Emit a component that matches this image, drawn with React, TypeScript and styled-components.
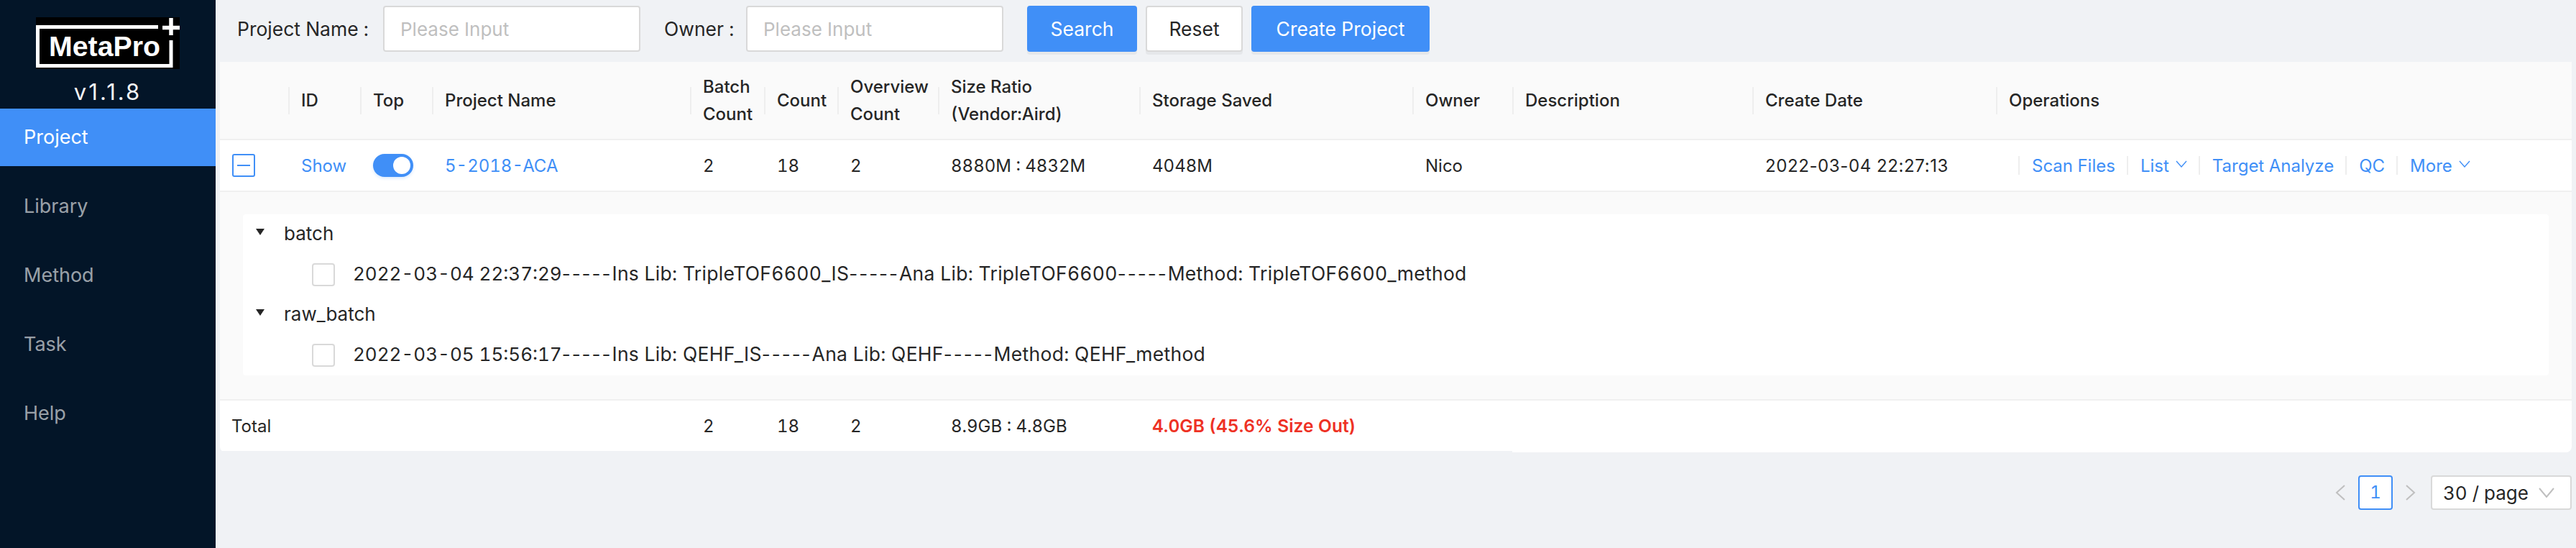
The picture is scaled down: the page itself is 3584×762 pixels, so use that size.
import React from "react";
import styled, { createGlobalStyle } from "styled-components";

const GlobalStyle = createGlobalStyle`
  html, body {
    margin: 0;
    padding: 0;
    background: #f0f2f5;
    font-family: Inter, "Noto Sans", sans-serif;
    font-feature-settings: "tnum";
    color: #262626;
  }
  * { box-sizing: border-box; }
`;

const navItems = ["Project", "Library", "Method", "Task", "Help"];

const columns = [
  { title: "", width: 95 },
  { title: "ID", width: 100 },
  { title: "Top", width: 100 },
  { title: "Project Name", width: 359 },
  { title: "Batch Count", width: 103 },
  { title: "Count", width: 102 },
  { title: "Overview Count", width: 140 },
  { title: "Size Ratio (Vendor:Aird)", width: 280 },
  { title: "Storage Saved", width: 380 },
  { title: "Owner", width: 139 },
  { title: "Description", width: 334 },
  { title: "Create Date", width: 339 },
  { title: "Operations", width: 801 },
];

const Logo = () => (
  <LogoSvg viewBox="0 0 200 72" width={200} height={72}>
    <rect width="200" height="72" fill="#000" />
    <path d="M170 13.5H2.5V67.5H188V32" fill="none" stroke="#fff" strokeWidth="5" />
    <path d="M176 14.5H200M188 1V25" fill="none" stroke="#fff" strokeWidth="5.5" />
    <text x="18" y="54" fill="#fff" fontFamily="Liberation Sans" fontWeight="700" fontSize="39" textLength="155" lengthAdjust="spacingAndGlyphs">
      MetaPro
    </text>
  </LogoSvg>
);

const Chevron = () => (
  <ChevronSvg viewBox="0 0 16 10" width={16} height={10}>
    <path d="M1 1l7 8 7-8" fill="none" stroke="currentColor" strokeWidth="1.4" />
  </ChevronSvg>
);

interface TreeGroupProps {
  name: string;
  date: string;
  parts: string[];
}

const TreeGroup = ({ name, date, parts }: TreeGroupProps) => (
  <>
    <TreeRow>
      <Caret viewBox="0 0 12 9" width={12} height={9}>
        <path d="M0 0h12L6 9z" fill="#262626" />
      </Caret>
      {name}
    </TreeRow>
    <TreeLeaf>
      <CheckBox />
      <span>{date}</span>
      {parts.map((part) => (
        <React.Fragment key={part}>
          <Dashes>-----</Dashes>
          <LeafPart>{part}</LeafPart>
        </React.Fragment>
      ))}
    </TreeLeaf>
  </>
);

export default function App() {
  return (
    <>
      <GlobalStyle />
      <Page>
        <Sidebar>
          <LogoBlock>
            <Logo />
            <Version>v1.1.8</Version>
          </LogoBlock>
          <Nav>
            {navItems.map((item, i) => (
              <NavItem key={item} $active={i === 0}>
                {item}
              </NavItem>
            ))}
          </Nav>
        </Sidebar>
        <Main>
          <SearchBar>
            <Label $width={203}>Project Name :</Label>
            <SearchInput placeholder="Please Input" />
            <Label $width={114} $left={33}>Owner :</Label>
            <SearchInput placeholder="Please Input" />
            <Buttons>
              <Button $primary $width={153}>Search</Button>
              <Button $width={135}>Reset</Button>
              <Button $primary $width={248}>Create Project</Button>
            </Buttons>
          </SearchBar>
          <Table>
            <colgroup>
              {columns.map((c) => (
                <col key={c.title} width={c.width} />
              ))}
            </colgroup>
            <thead>
              <tr>
                {columns.map((c, i) => (
                  <Th key={c.title} $divider={i > 0}>
                    {c.title}
                  </Th>
                ))}
              </tr>
            </thead>
            <tbody>
              <tr>
                <Td>
                  <ExpandIcon />
                </Td>
                <Td>
                  <Link>Show</Link>
                </Td>
                <Td>
                  <Switch />
                </Td>
                <Td>
                  <Link>5-2018-ACA</Link>
                </Td>
                <Td>2</Td>
                <Td>18</Td>
                <Td>2</Td>
                <Td>8880M : 4832M</Td>
                <Td>4048M</Td>
                <Td>Nico</Td>
                <Td />
                <Td>
                  <CreateDate>2022-03-04 22:27:13</CreateDate>
                </Td>
                <Td>
                  <Ops>
                    <OpLink>Scan Files</OpLink>
                    <OpLink>List<Chevron /></OpLink>
                    <OpLink>Target Analyze</OpLink>
                    <OpLink>QC</OpLink>
                    <OpLink>More<Chevron /></OpLink>
                  </Ops>
                </Td>
              </tr>
              <tr>
                <ExpandedCell colSpan={13}>
                  <TreeCard>
                    <TreeGroup
                      name="batch"
                      date="2022-03-04 22:37:29"
                      parts={["Ins Lib: TripleTOF6600_IS", "Ana Lib: TripleTOF6600", "Method: TripleTOF6600_method"]}
                    />
                    <TreeGroup
                      name="raw_batch"
                      date="2022-03-05 15:56:17"
                      parts={["Ins Lib: QEHF_IS", "Ana Lib: QEHF", "Method: QEHF_method"]}
                    />
                  </TreeCard>
                </ExpandedCell>
              </tr>
            </tbody>
            <tfoot>
              <tr>
                <SumCell colSpan={4}>Total</SumCell>
                <SumCell>2</SumCell>
                <SumCell>18</SumCell>
                <SumCell>2</SumCell>
                <SumCell>8.9GB : 4.8GB</SumCell>
                <SumCell>
                  <Saved>4.0GB (45.6% Size Out)</Saved>
                </SumCell>
                <SumCell />
                <SumEnd colSpan={3} />
              </tr>
            </tfoot>
          </Table>
          <Pager>
            <PagerArrow viewBox="0 0 14 22" width={14} height={22}>
              <path d="M13 1L2 11l11 10" fill="none" stroke="#bfbfbf" strokeWidth="2" />
            </PagerArrow>
            <PageNumber>1</PageNumber>
            <PagerArrow viewBox="0 0 14 22" width={14} height={22}>
              <path d="M1 1l11 10L1 21" fill="none" stroke="#bfbfbf" strokeWidth="2" />
            </PagerArrow>
            <PageSize>
              30 / page
              <SizeChevron viewBox="0 0 22 14" width={22} height={14}>
                <path d="M1 1l10 12L21 1" fill="none" stroke="#bfbfbf" strokeWidth="2" />
              </SizeChevron>
            </PageSize>
          </Pager>
        </Main>
      </Page>
    </>
  );
}

const Page = styled.div`
  display: flex;
  width: 3584px;
  height: 762px;
  overflow: hidden;
`;

const Sidebar = styled.aside`
  flex: 0 0 300px;
  background: #031528;
`;

const LogoBlock = styled.div`
  display: flex;
  flex-direction: column;
  align-items: center;
  height: 151px;
  padding-top: 24px;
`;

const LogoSvg = styled.svg`
  display: block;
`;

const Version = styled.div`
  margin-top: 12px;
  font-size: 31px;
  font-feature-settings: normal;
  line-height: 40px;
  letter-spacing: 3px;
  color: #f2f4f7;
`;

const Nav = styled.nav`
  display: flex;
  flex-direction: column;
  gap: 16px;
`;

const NavItem = styled.div<{ $active?: boolean }>`
  height: 80px;
  padding-left: 33px;
  font-size: 27px;
  line-height: 80px;
  background: ${(p) => (p.$active ? "#408ff7" : "transparent")};
  color: ${(p) => (p.$active ? "#fff" : "rgba(255,255,255,.62)")};
`;

const Main = styled.main`
  flex: 1;
  padding: 8px 6px 0;
  min-width: 0;
`;

const SearchBar = styled.div`
  display: flex;
  align-items: center;
  height: 78px;
  padding-left: 24px;
  padding-bottom: 14px;
`;

const Label = styled.label<{ $left?: number; $width: number }>`
  flex: none;
  width: ${(p) => p.$width}px;
  margin-left: ${(p) => p.$left ?? 0}px;
  font-size: 26.5px;
  white-space: nowrap;
`;

const SearchInput = styled.input`
  flex: none;
  width: 358px;
  height: 64px;
  padding: 0 22px;
  background: #fff;
  border: 2px solid #d9d9d9;
  border-radius: 4px;
  outline: none;
  font-family: inherit;
  font-size: 26px;
  &::placeholder {
    color: #bfbfbf;
  }
`;

const Buttons = styled.div`
  display: flex;
  gap: 12px;
  margin-left: 33px;
`;

const Button = styled.button<{ $primary?: boolean; $width: number }>`
  width: ${(p) => p.$width}px;
  height: 64px;
  padding: 0;
  font-family: inherit;
  font-size: 26.5px;
  color: ${(p) => (p.$primary ? "#fff" : "#262626")};
  background: ${(p) => (p.$primary ? "#408ff7" : "#fff")};
  border: 2px solid ${(p) => (p.$primary ? "#408ff7" : "#d9d9d9")};
  border-radius: 4px;
  box-shadow: 0 4px 0 rgba(0, 0, 0, 0.045);
`;

const Table = styled.table`
  width: 3272px;
  table-layout: fixed;
  border-collapse: separate;
  border-spacing: 0;
  background: #fff;
  border-radius: 8px;
  font-size: 24px;
`;

const Th = styled.th<{ $divider?: boolean }>`
  position: relative;
  height: 109px;
  padding: 0 0 0 18px;
  background: #fafafa;
  border-bottom: 2px solid #f0f0f0;
  font-weight: 500;
  line-height: 38px;
  text-align: left;
  &::before {
    content: "";
    display: ${(p) => (p.$divider ? "block" : "none")};
    position: absolute;
    left: 0;
    top: 35px;
    width: 2px;
    height: 38px;
    background: #eeeeee;
  }
`;

const Td = styled.td`
  height: 72px;
  padding: 0 0 0 18px;
  border-bottom: 2px solid #f0f0f0;
  white-space: nowrap;
  color: #262626;
`;

const CreateDate = styled.span`
  font-feature-settings: normal;
  letter-spacing: 0.6px;
`;

const ExpandIcon = styled.span`
  position: relative;
  display: block;
  width: 32px;
  height: 32px;
  margin-left: -1px;
  background: #fff;
  border: 2px solid #408ff7;
  border-radius: 3px;
  &::after {
    content: "";
    position: absolute;
    left: 5px;
    right: 5px;
    top: 13px;
    height: 2px;
    background: #408ff7;
  }
`;

const Link = styled.a`
  color: #408ff7;
`;

const Switch = styled.span`
  position: relative;
  display: block;
  width: 56px;
  height: 32px;
  background: #408ff7;
  border-radius: 16px;
  box-shadow: 0 2px 4px rgba(64, 143, 247, 0.2);
  &::after {
    content: "";
    position: absolute;
    right: 4px;
    top: 4px;
    width: 24px;
    height: 24px;
    background: #fff;
    border-radius: 50%;
  }
`;

const Ops = styled.div`
  display: flex;
  padding-left: 13px;
`;

const OpLink = styled.a`
  display: flex;
  align-items: center;
  height: 26px;
  padding: 0 16px 0 17px;
  border-left: 2px solid #eeeeee;
  color: #408ff7;
  white-space: nowrap;
`;

const ChevronSvg = styled.svg`
  margin-left: 9px;
  margin-top: -4px;
`;

const ExpandedCell = styled.td`
  padding: 31px 32px 33px;
  background: #fafafa;
  border-bottom: 2px solid #f0f0f0;
`;

const TreeCard = styled.div`
  background: #fff;
  border-radius: 4px;
  font-size: 26px;
`;

const TreeRow = styled.div`
  display: flex;
  align-items: center;
  height: 56px;
  padding-left: 18px;
  padding-bottom: 4px;
`;

const Caret = styled.svg`
  margin-right: 27px;
  margin-top: -4px;
`;

const TreeLeaf = styled.div`
  display: flex;
  align-items: center;
  height: 56px;
  padding-left: 96px;
  padding-bottom: 4px;
  white-space: nowrap;
`;

const Dashes = styled.span`
  font-feature-settings: normal;
  letter-spacing: 2px;
`;

const LeafPart = styled.span`
  font-size: 26.5px;
  letter-spacing: 0.3px;
`;

const CheckBox = styled.span`
  flex: none;
  width: 32px;
  height: 32px;
  margin-top: 4px;
  margin-right: 25px;
  background: #fff;
  border: 2px solid #d9d9d9;
  border-radius: 4px;
`;

const SumCell = styled.td`
  height: 72px;
  padding: 0 0 0 18px;
  border-bottom: 2px solid #f0f2f5;
  white-space: nowrap;
  &[colspan="4"] {
    padding-left: 16px;
  }
`;

const SumEnd = styled.td`
  border-bottom-right-radius: 8px;
`;

const Saved = styled.span`
  color: #ee3124;
  font-size: 24.5px;
  font-weight: 600;
`;

const Pager = styled.div`
  display: flex;
  align-items: center;
  justify-content: flex-end;
  margin-top: 32px;
`;

const PagerArrow = styled.svg`
  flex: none;
`;

const PageNumber = styled.span`
  width: 48px;
  height: 48px;
  margin: 0 18px;
  background: #fff;
  border: 2px solid #408ff7;
  border-radius: 4px;
  color: #408ff7;
  font-size: 24px;
  line-height: 44px;
  text-align: center;
`;

const PageSize = styled.div`
  display: flex;
  align-items: center;
  justify-content: space-between;
  width: 196px;
  height: 48px;
  margin-left: 21px;
  padding: 0 22px 0 15px;
  background: #fff;
  border: 2px solid #d9d9d9;
  border-radius: 4px;
  font-size: 26px;
  white-space: nowrap;
`;

const SizeChevron = styled.svg`
  flex: none;
`;
